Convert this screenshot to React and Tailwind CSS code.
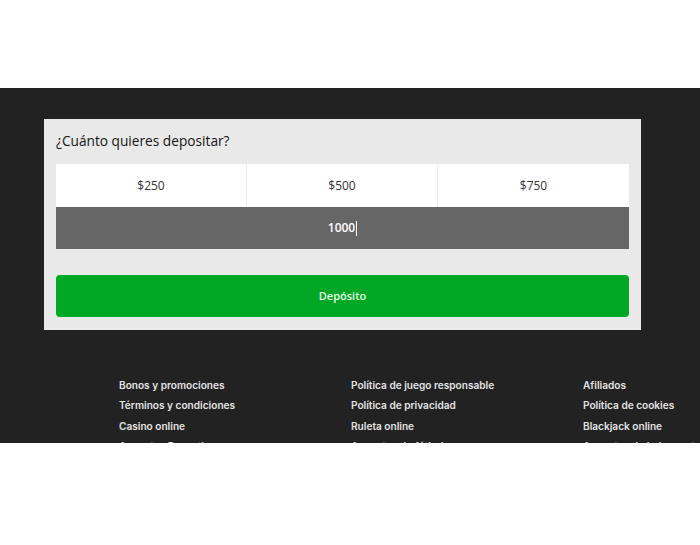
export default function App() {
  const cols = [
    ["Bonos y promociones", "Términos y condiciones", "Casino online", "Apuestas Deportivas"],
    ["Política de juego responsable", "Política de privacidad", "Ruleta online", "Apuestas de fútbol"],
    ["Afiliados", "Política de cookies", "Blackjack online", "Apuestas de baloncesto"],
  ];
  return (
    <div className="w-[700px] h-[545px] bg-white overflow-hidden">
      <div className="h-[88px] bg-white" />
      <div className="h-[355px] bg-[#222222] overflow-hidden pt-[31px]">
        <div className="ml-[44px] w-[597px] h-[211px] bg-[#e9e9e9] px-[12px] flex flex-col" style={{ fontFamily: '"Open Sans", "Noto Sans", sans-serif' }}>
          <div className="h-[45px] flex items-center text-[13.7px] text-[#151515] font-medium">¿Cuánto quieres depositar?</div>
          <div className="grid grid-cols-3 h-[43px] bg-white">
            <div className="flex items-center justify-center text-[12px] text-[#333] border-r border-[#ececec]">$250</div>
            <div className="flex items-center justify-center text-[12px] text-[#333] border-r border-[#ececec]">$500</div>
            <div className="flex items-center justify-center text-[12px] text-[#333]">$750</div>
          </div>
          <div className="h-[42px] bg-[#666666] flex items-center justify-center text-[12px] text-white font-semibold">
            <span>1000</span>
            <span className="inline-block w-px h-[15px] bg-white ml-px" />
          </div>
          <div className="h-[26px]" />
          <button className="h-[42px] w-full rounded-[4px] bg-[#00a826] text-[#e8ffe8] text-[11px] font-semibold flex items-center justify-center">Depósito</button>
        </div>
        <div className="flex pl-[119px] pt-[45px]" style={{ fontFamily: 'Inter, "Noto Sans", sans-serif' }}>
          {cols.map((c, i) => (
            <div key={i} className="w-[232px] shrink-0 flex flex-col">
              {c.map((t) => (
                <div key={t} className="h-[20.4px] leading-[20.4px] text-[10.1px] font-semibold text-[#e4e4e4] whitespace-nowrap">{t}</div>
              ))}
            </div>
          ))}
        </div>
      </div>
    </div>
  );
}
